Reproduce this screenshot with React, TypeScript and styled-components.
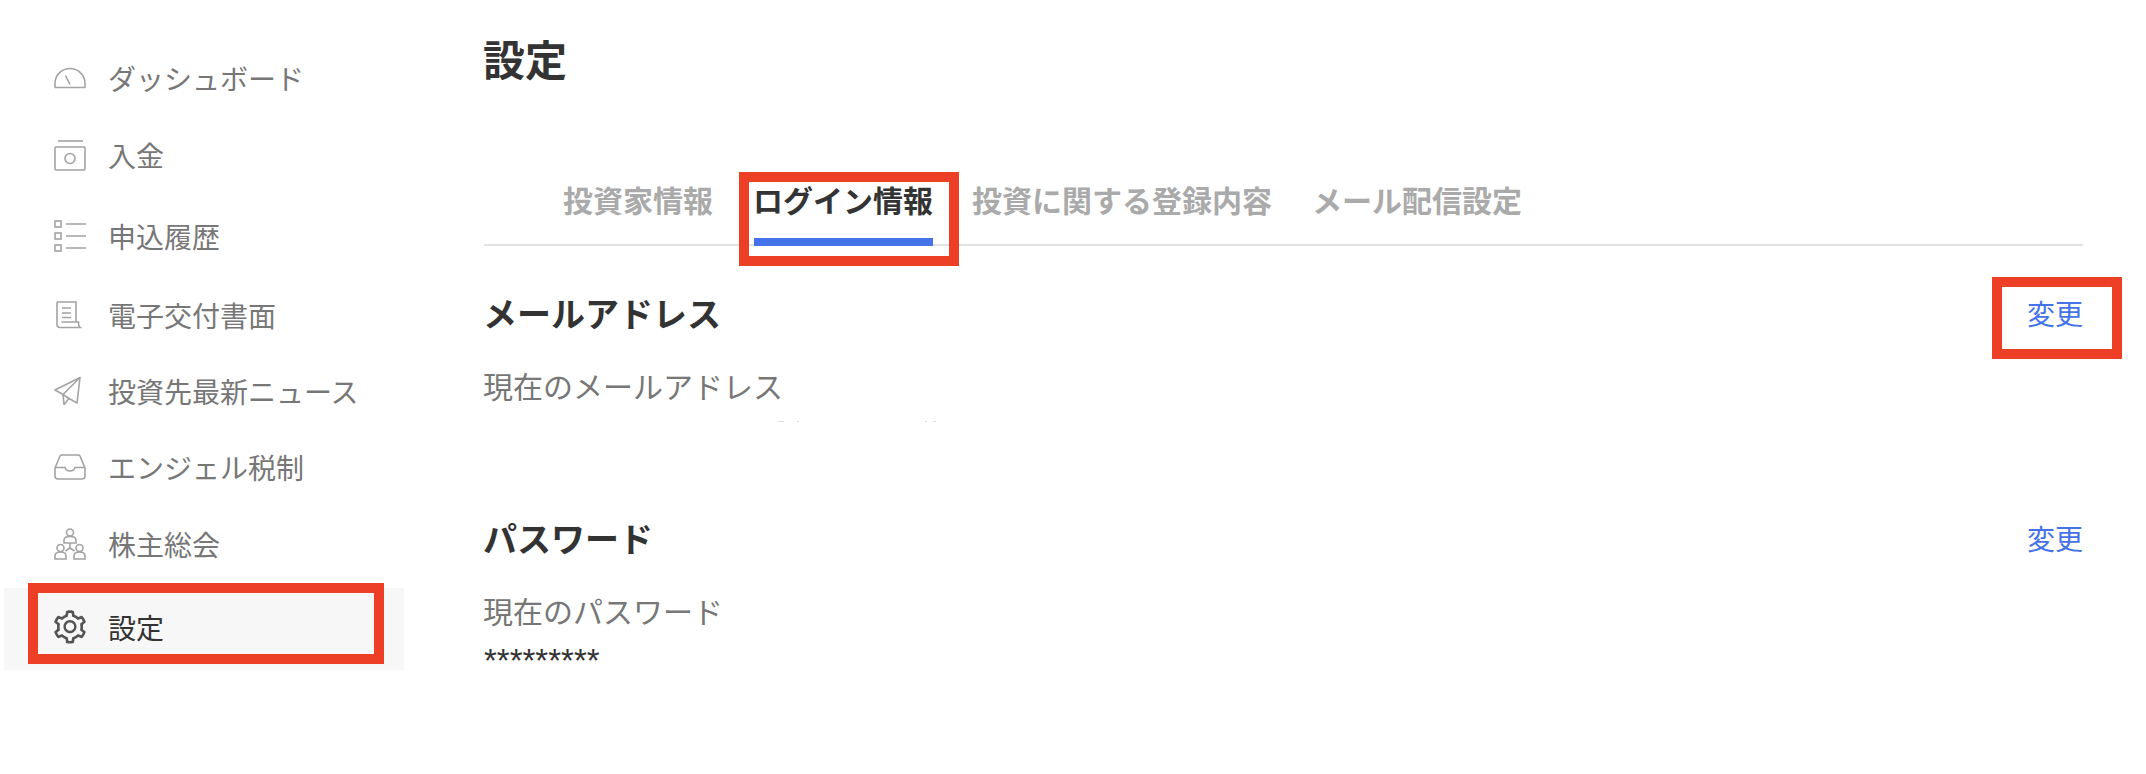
import React, { type ReactNode } from 'react';
import styled, { createGlobalStyle } from 'styled-components';
import { AiOutlineSetting } from 'react-icons/ai';

const GlobalStyle = createGlobalStyle`
  html, body {
    margin: 0;
    padding: 0;
    background: #fff;
  }
  body {
    font-family: "Noto Sans CJK JP", "Liberation Sans", sans-serif;
    color: #333;
  }
`;

const ANNOTATION = '#ec3f25';
const BLUE = '#4472e8';

const Page = styled.div`
  display: flex;
  width: 2146px;
  height: 774px;
  overflow: hidden;
`;

const Sidebar = styled.nav`
  width: 400px;
  margin-left: 4px;
  padding-top: 41px;
  flex-shrink: 0;
`;

const NavItem = styled.div<{ $h: number; $pb?: number; $active?: boolean }>`
  position: relative;
  display: flex;
  align-items: center;
  box-sizing: border-box;
  height: ${(p) => p.$h}px;
  padding: 0 0 ${(p) => p.$pb ?? 3}px 50px;
  font-size: 28px;
  color: ${(p) => (p.$active ? '#333' : '#777')};
  background: ${(p) => (p.$active ? '#f7f7f7' : 'transparent')};
`;

const NavIcon = styled.span<{ $active?: boolean }>`
  display: flex;
  align-items: center;
  justify-content: flex-start;
  width: 32px;
  height: 32px;
  margin-right: 22px;
  color: ${(p) => (p.$active ? '#555' : '#a3a3a3')};
  svg {
    display: block;
    flex-shrink: 0;
  }
`;

const GearIcon = styled(AiOutlineSetting)`
  margin-left: -3px;
`;

// red marker drawn on top of the screenshot
const Marker = styled.span<{ $t: number; $r: number; $b: number; $l: number }>`
  position: absolute;
  top: ${(p) => p.$t}px;
  right: ${(p) => p.$r}px;
  bottom: ${(p) => p.$b}px;
  left: ${(p) => p.$l}px;
  border: 10px solid ${ANNOTATION};
  pointer-events: none;
`;

const Main = styled.main`
  width: 1599px;
  margin-left: 80px;
`;

const Title = styled.h1`
  margin: 28px 0 2px -1px;
  font-size: 42px;
  font-weight: 700;
  line-height: 60px;
  color: #333;
`;

const TabBar = styled.div`
  display: flex;
  gap: 40px;
  height: 94px;
  margin-top: 62px;
  padding-left: 79px;
  border-bottom: 2px solid #e2e2e2;
`;

const Tab = styled.div<{ $active?: boolean }>`
  position: relative;
  height: 96px;
  box-sizing: border-box;
  padding-top: 27px;
  margin: ${(p) => (p.$active ? '0 -1px 0 1px' : '0')};
  text-indent: ${(p) => (p.$active ? '-1px' : '0')};
  font-size: 30px;
  font-weight: 700;
  line-height: 44px;
  white-space: nowrap;
  color: ${(p) => (p.$active ? '#333' : '#aaa')};
  border-bottom: ${(p) => (p.$active ? `8px solid ${BLUE}` : 'none')};
`;

const Section = styled.section<{ $h: number; $pt?: number }>`
  box-sizing: border-box;
  height: ${(p) => p.$h}px;
  padding-top: ${(p) => p.$pt ?? 0}px;
`;

const SectionHead = styled.div`
  display: flex;
  align-items: center;
  justify-content: space-between;
  height: 50px;
`;

const SectionTitle = styled.h2`
  margin: 0 0 0 -1px;
  font-size: 34px;
  font-weight: 700;
  line-height: 50px;
  color: #333;
`;

const ChangeLink = styled.a`
  position: relative;
  font-size: 28px;
  line-height: 40px;
  color: ${BLUE};
`;

const FieldLabel = styled.div`
  margin: 25px 0 0 -1px;
  font-size: 30px;
  line-height: 44px;
  color: #777;
`;

const FieldValue = styled.div`
  margin-top: 12px;
  font-family: "Liberation Sans", sans-serif;
  font-size: 33px;
  line-height: 34px;
  color: #333;
`;

// what is left of the masked address in the source
const MaskedValue = styled.div`
  display: flex;
  align-items: flex-start;
  margin: 14px 0 0 294px;
`;

const Speck = styled.i<{ $w: number; $gap: number }>`
  width: ${(p) => p.$w}px;
  height: 1px;
  margin-right: ${(p) => p.$gap}px;
  background: #dedede;
`;

const stroke = {
  fill: 'none',
  stroke: 'currentColor',
  strokeWidth: 1.6,
};

const GaugeIcon = () => (
  <svg width="32" height="22" viewBox="0 0 32 22" {...stroke}>
    <path d="M1 20.5v-4a15 15 0 0 1 30 0v4z" strokeLinejoin="round" />
    <path d="M11.5 8.5l4.5 9" />
  </svg>
);

const DepositIcon = () => (
  <svg width="32" height="31" viewBox="0 0 32 31" {...stroke}>
    <path d="M4 1h25" />
    <rect x="1" y="7" width="30" height="23" rx="1" />
    <circle cx="16" cy="18.5" r="5" />
  </svg>
);

const ListIcon = () => (
  <svg width="32" height="32" viewBox="0 0 32 32" {...stroke}>
    <rect x="1" y="1" width="6" height="6" />
    <rect x="1" y="13" width="6" height="6" />
    <rect x="1" y="25" width="6" height="6" />
    <path d="M12 4h20M12 16h20M12 28h20" />
  </svg>
);

const DocIcon = () => (
  <svg width="28" height="28" viewBox="0 0 28 28" {...stroke}>
    <path d="M3 1h19v20" />
    <path d="M3 1v22q0 3.500 3 3.500h20q-1.500-1-1.500-5.500H7.500" />
    <path d="M8 7h9M8 12h9M8 16.500h9" />
  </svg>
);

const SendIcon = () => (
  <svg width="28" height="30" viewBox="0 0 28 30" {...stroke}>
    <path d="M26 1.500L1 14l8 4.500 1 10 5-6 8 4.500z" strokeLinejoin="round" />
    <path d="M26 1.500L9 18.500M9 18.500l6 4" />
  </svg>
);

const InboxIcon = () => (
  <svg width="32" height="26" viewBox="0 0 32 26" {...stroke}>
    <path
      d="M1 14l5-12q.500-1 2-1h16q1.500 0 2 1l5 12v8q0 3-3 3H4q-3 0-3-3z"
      strokeLinejoin="round"
    />
    <path d="M1 13.500h10q1 3.500 5 3.500t5-3.500h10" />
  </svg>
);

const OrgIcon = () => (
  <svg width="32" height="32" viewBox="0 0 32 32" {...stroke}>
    <circle cx="16" cy="4.500" r="3.500" />
    <path d="M10 15v-3q0-3.500 6-3.500t6 3.500v3z" />
    <circle cx="6.500" cy="20" r="3.500" />
    <path d="M1 31v-3q0-4 5.500-4t5.500 4v3z" />
    <circle cx="25.500" cy="20" r="3.500" />
    <path d="M20 31v-3q0-4 5.500-4t5.500 4v3z" />
    <path d="M16 15v5M16 20l-4.500 3M16 20l4.500 3" />
  </svg>
);

type NavEntry = {
  label: string;
  icon: ReactNode;
  h: number;
  pb?: number;
  active?: boolean;
};

const navItems: NavEntry[] = [
  { label: 'ダッシュボード', icon: <GaugeIcon />, h: 76 },
  { label: '入金', icon: <DepositIcon />, h: 79 },
  { label: '申込履歴', icon: <ListIcon />, h: 82 },
  { label: '電子交付書面', icon: <DocIcon />, h: 76 },
  { label: '投資先最新ニュース', icon: <SendIcon />, h: 76 },
  { label: 'エンジェル税制', icon: <InboxIcon />, h: 77 },
  { label: '株主総会', icon: <OrgIcon />, h: 81, pb: 8 },
  { label: '設定', icon: <GearIcon size={38} />, h: 82, pb: 5, active: true },
];

const tabs = ['投資家情報', 'ログイン情報', '投資に関する登録内容', 'メール配信設定'];

export default function App() {
  return (
    <Page>
      <GlobalStyle />
      <Sidebar>
        {navItems.map((item) => (
          <NavItem key={item.label} $h={item.h} $pb={item.pb} $active={item.active}>
            <NavIcon $active={item.active}>{item.icon}</NavIcon>
            {item.label}
            {item.active && <Marker $t={-5} $r={20} $b={6} $l={24} />}
          </NavItem>
        ))}
      </Sidebar>
      <Main>
        <Title>設定</Title>
        <TabBar>
          {tabs.map((tab, i) => (
            <Tab key={tab} $active={i === 1}>
              {tab}
              {i === 1 && <Marker $t={22} $r={-26} $b={-28} $l={-15} />}
            </Tab>
          ))}
        </TabBar>
        <Section $h={267} $pt={42}>
          <SectionHead>
            <SectionTitle>メールアドレス</SectionTitle>
            <ChangeLink>
              変更
              <Marker $t={-16} $r={-39} $b={-26} $l={-35} />
            </ChangeLink>
          </SectionHead>
          <FieldLabel>現在のメールアドレス</FieldLabel>
          <MaskedValue>
            <Speck $w={6} $gap={13} />
            <Speck $w={2} $gap={126} />
            <Speck $w={2} $gap={6} />
            <Speck $w={3} $gap={0} />
          </MaskedValue>
        </Section>
        <Section $h={180}>
          <SectionHead>
            <SectionTitle>パスワード</SectionTitle>
            <ChangeLink>変更</ChangeLink>
          </SectionHead>
          <FieldLabel>現在のパスワード</FieldLabel>
          <FieldValue>*********</FieldValue>
        </Section>
      </Main>
    </Page>
  );
}
